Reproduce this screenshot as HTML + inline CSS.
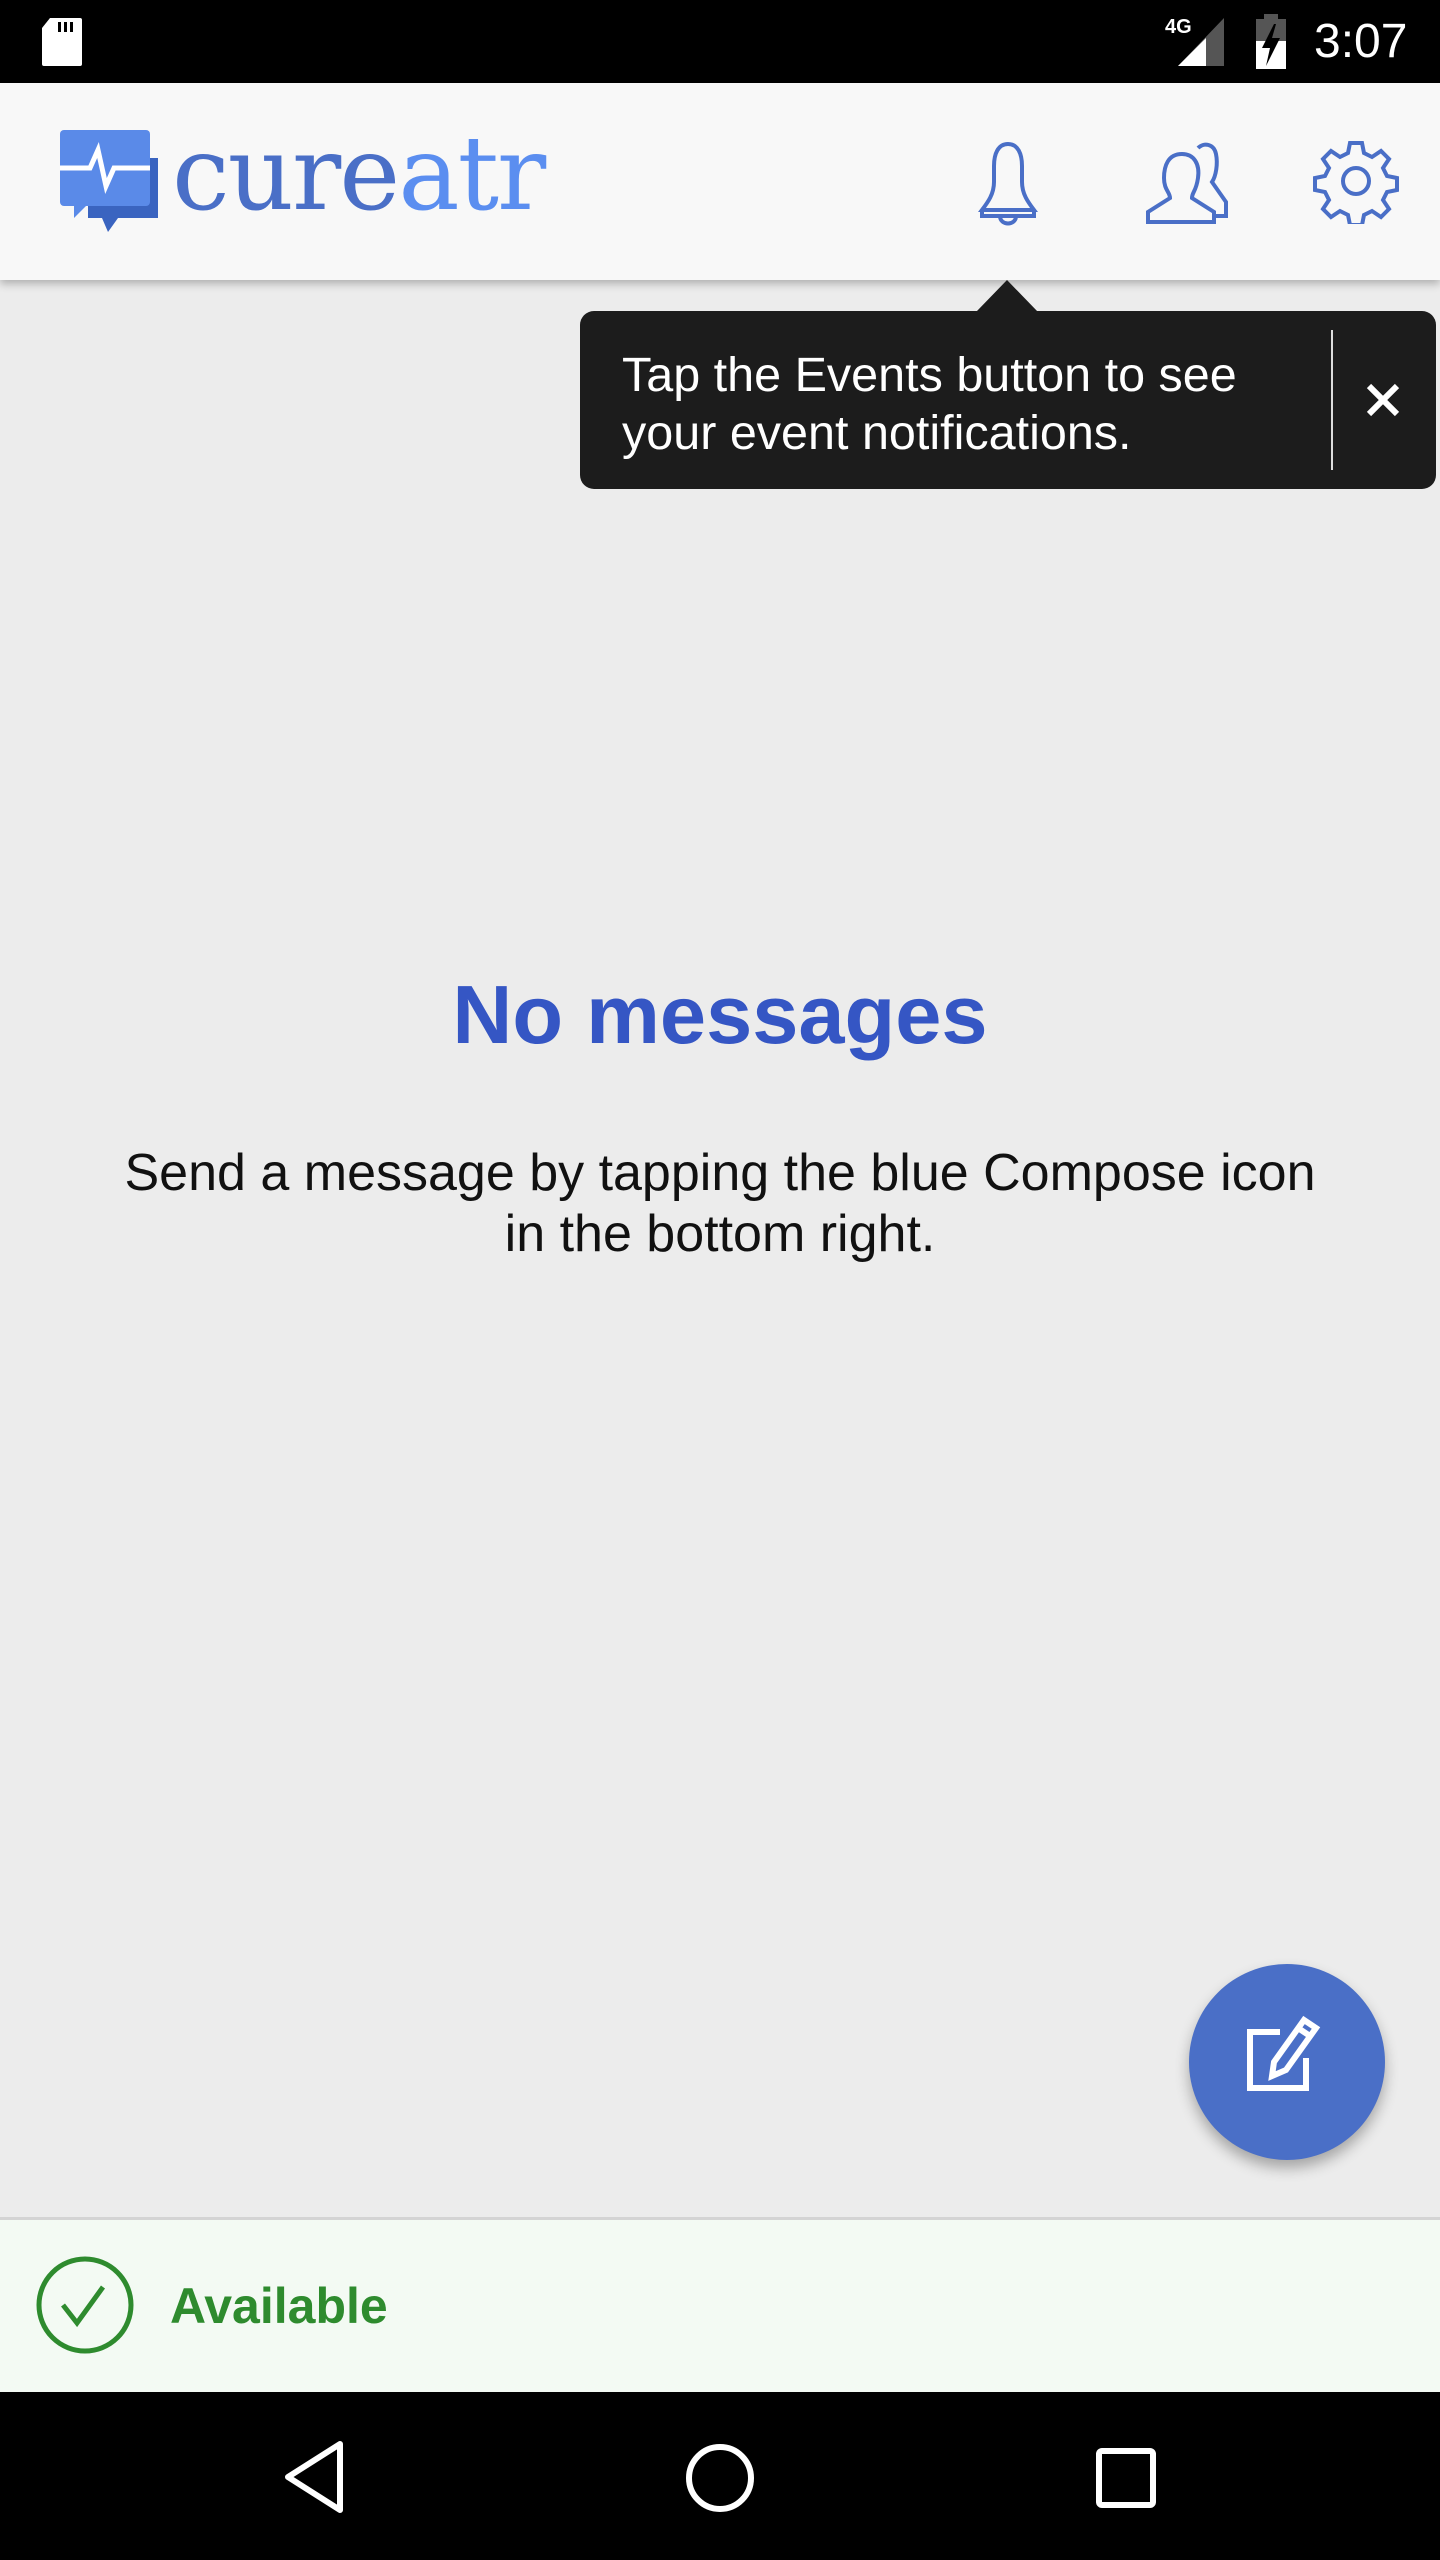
<!DOCTYPE html>
<html><head><meta charset="utf-8"><style>
*{margin:0;padding:0;box-sizing:border-box}
body{width:1440px;height:2560px;background:#ececec;font-family:"Liberation Sans",sans-serif;position:relative;overflow:hidden}
.abs{position:absolute}
</style></head><body>
<div class="abs" style="left:0;top:0;width:1440px;height:83px;background:#000"></div>
<svg class="abs" style="left:40px;top:16px" width="44" height="52" viewBox="0 0 44 52"><path d="M10 2h30a2 2 0 0 1 2 2v44a2 2 0 0 1-2 2H4a2 2 0 0 1-2-2V12z" fill="#fff"/><rect x="18" y="6" width="3" height="10" fill="#000"/><rect x="24" y="6" width="3" height="10" fill="#000"/><rect x="30" y="6" width="3" height="10" fill="#000"/></svg>
<div class="abs" style="left:1165px;top:16px;color:#fff;font-size:20px;font-weight:bold">4G</div>
<svg class="abs" style="left:1176px;top:16px" width="50" height="52"><polygon points="48,2 48,50 2,50" fill="#555"/><polygon points="30,22 30,50 2,50" fill="#fff"/></svg>
<svg class="abs" style="left:1254px;top:14px" width="36" height="56"><rect x="10" y="0" width="14" height="6" fill="#555"/><rect x="2" y="5" width="30" height="50" fill="#fff"/><rect x="2" y="5" width="30" height="22" fill="#555"/><polygon points="20,10 8,34 16,34 12,52 26,24 18,24 22,10" fill="#000"/></svg>
<div class="abs" style="left:1314px;top:14px;color:#fff;font-size:48px">3:07</div>

<div class="abs" style="left:0;top:83px;width:1440px;height:197px;background:#f8f8f8;box-shadow:0 4px 8px rgba(0,0,0,0.25)"></div>
<svg class="abs" style="left:58px;top:128px" width="104" height="104" viewBox="0 0 104 104"><path d="M30 30h70v60H60l-10 14-6-14H30z" fill="#3a64c0"/><rect x="2" y="2" width="90" height="76" rx="4" fill="#5a8ae8"/><path d="M2 74h14l0 16 16-16z" fill="#5a8ae8"/><path d="M2 40h30l8-18 8 36 8-18h36" stroke="#fff" stroke-width="5" fill="none"/></svg>
<div class="abs" style="left:172px;top:114px;font-family:'DejaVu Serif',serif;font-size:103px;letter-spacing:-2px;line-height:120px"><span style="color:#4a6fc7">cure</span><span style="color:#5b8ef0">atr</span></div>
<svg class="abs" style="left:966px;top:138px" width="84" height="88" viewBox="0 0 84 88" fill="none" stroke="#4a6fc7" stroke-width="4"><path d="M42 6c-10 0-14 10-14 22v16c0 12-6 20-12 28h52c-6-8-12-16-12-28V28c0-12-4-22-14-22z"/><path d="M16 72v6h52v-6"/><path d="M34 78c0 10 16 10 16 0"/></svg>
<svg class="abs" style="left:1140px;top:138px" width="96" height="88" viewBox="0 0 96 88" fill="none" stroke="#4a6fc7" stroke-width="4"><path d="M58 10c6-6 16-4 18 6s0 22-4 28l14 20v14H76"/><path d="M42 16c12 0 18 10 16 24s-6 14-6 20l22 14v10H8V74l22-14c0-6-6-8-6-20s4-24 18-24z"/></svg>
<svg class="abs" style="left:1313px;top:138px" width="86" height="86" viewBox="-43 -43 86 86" fill="none" stroke="#4a6fc7" stroke-width="4"><path d="M-6-38h12l2 10 8 4 9-6 8 8-6 9 4 8 10 2v12l-10 2-4 8 6 9-8 8-9-6-8 4-2 10h-12l-2-10-8-4-9 6-8-8 6-9-4-8-10-2v-12l10-2 4-8-6-9 8-8 9 6 8-4z"/><circle r="13"/></svg>

<svg class="abs" style="left:976px;top:280px" width="62" height="32"><polygon points="31,0 62,32 0,32" fill="#1c1c1c"/></svg>
<div class="abs" style="left:580px;top:311px;width:856px;height:178px;background:#1c1c1c;border-radius:14px"></div>
<div class="abs" style="left:622px;top:346px;color:#fff;font-size:48.5px;line-height:58px;width:720px;white-space:nowrap">Tap the Events button to see<br>your event notifications.</div>
<div class="abs" style="left:1331px;top:330px;width:2px;height:140px;background:#ddd"></div>
<svg class="abs" style="left:1365px;top:382px" width="36" height="36"><path d="M4 4L32 32M32 4L4 32" stroke="#fff" stroke-width="6"/></svg>

<div class="abs" style="left:0;top:965px;width:1440px;text-align:center;color:#3556c4;font-size:83px;font-weight:bold;line-height:100px">No messages</div>
<div class="abs" style="left:0;top:1143px;width:1440px;text-align:center;color:#111;font-size:52px;line-height:61px;white-space:nowrap">Send a message by tapping the blue Compose icon<br>in the bottom right.</div>

<div class="abs" style="left:1189px;top:1964px;width:196px;height:196px;border-radius:50%;background:#4a6fc7;box-shadow:0 8px 14px rgba(0,0,0,0.3)"></div>
<svg class="abs" style="left:1240px;top:2014px" width="100" height="100" viewBox="0 0 100 100" fill="none" stroke="#fff" stroke-width="6"><path d="M40 18H10v56h56V44"/><path d="M64 6l12 8-30 42-14 6 2-14z"/><path d="M58 14l12 8"/></svg>

<div class="abs" style="left:0;top:2217px;width:1440px;height:175px;background:#f3faf3;border-top:3px solid #d4d4d4"></div>
<svg class="abs" style="left:35px;top:2255px" width="100" height="100"><circle cx="50" cy="50" r="46" fill="none" stroke="#2e8b2e" stroke-width="5"/><path d="M28 50l14 18 26-36" fill="none" stroke="#2e8b2e" stroke-width="5"/></svg>
<div class="abs" style="left:170px;top:2277px;color:#2e8b2e;font-size:50px;font-weight:bold">Available</div>

<div class="abs" style="left:0;top:2392px;width:1440px;height:168px;background:#000"></div>
<svg class="abs" style="left:280px;top:2440px" width="70" height="74"><path d="M60 4L8 37l52 33z" fill="none" stroke="#fff" stroke-width="6" stroke-linejoin="round"/></svg>
<svg class="abs" style="left:682px;top:2440px" width="76" height="76"><circle cx="38" cy="38" r="31" fill="none" stroke="#fff" stroke-width="6"/></svg>
<svg class="abs" style="left:1094px;top:2446px" width="64" height="64"><rect x="5" y="5" width="54" height="54" rx="3" fill="none" stroke="#fff" stroke-width="6"/></svg>
</body></html>
